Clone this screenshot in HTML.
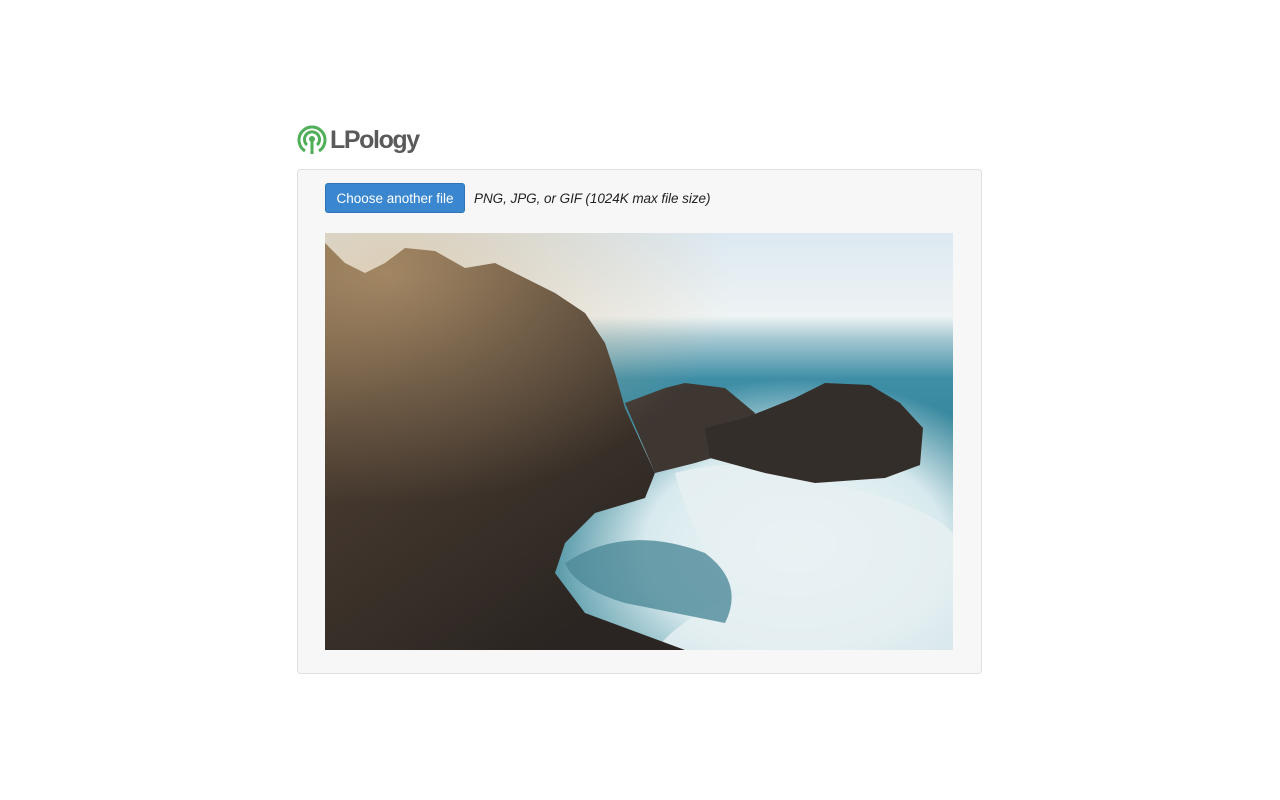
<!DOCTYPE html>
<html><head><style>
body{margin:0;background:#fff;font-family:"Liberation Sans",sans-serif;width:1280px;height:800px;position:relative;overflow:hidden}
.logo{position:absolute;left:296px;top:123px;height:34px;display:flex;align-items:center}
.logo span{font-weight:bold;font-size:25px;color:#5a5a5a;letter-spacing:-1.4px;margin-left:2px}
.panel{position:absolute;left:297px;top:169px;width:683px;height:503px;background:#f7f7f7;border:1px solid #e0e0e0;border-radius:4px}
.btn{position:absolute;left:325px;top:183px;width:140px;height:30px;background:#3a87cf;border:1px solid #2f75b5;border-radius:3px;box-sizing:border-box;color:#fff;font-size:13.5px;line-height:29px;text-align:center}
.hint{position:absolute;left:474px;top:191px;font-size:13.5px;font-style:italic;color:#222;letter-spacing:-0.05px}
.photo{position:absolute;left:325px;top:233px;width:628px;height:417px;overflow:hidden}
</style></head><body>
<div class="logo">
<svg width="32" height="32" viewBox="0 0 32 32"><g fill="none" stroke="#4fae57" stroke-width="3"><path d="M9 27 A13 13 0 1 1 23 27"/><path d="M11 21 A7.5 7.5 0 1 1 21 21"/><line x1="16" y1="16" x2="16" y2="30"/></g><circle cx="16" cy="15" r="3" fill="#4fae57"/></svg>
<span>LPology</span></div>
<div class="panel"></div>
<div class="btn">Choose another file</div>
<div class="hint">PNG, JPG, or GIF (1024K max file size)</div>
<div class="photo">
<svg width="628" height="417" viewBox="0 0 628 417">
<defs>
<linearGradient id="sky" x1="0" y1="0" x2="0" y2="1"><stop offset="0" stop-color="#dce9f2"/><stop offset="0.2" stop-color="#eef3f4"/><stop offset="0.25" stop-color="#a9cad4"/><stop offset="0.35" stop-color="#3e8ea6"/><stop offset="0.6" stop-color="#2f7f92"/><stop offset="1" stop-color="#6aa6b3"/></linearGradient>
<linearGradient id="cliff" x1="0" y1="0" x2="0.6" y2="1"><stop offset="0" stop-color="#6e5840"/><stop offset="0.35" stop-color="#4a3c30"/><stop offset="1" stop-color="#2a2522"/></linearGradient>
<radialGradient id="sun" cx="0.1" cy="0.1" r="0.55"><stop offset="0" stop-color="#d8b585" stop-opacity="0.55"/><stop offset="1" stop-color="#d8b585" stop-opacity="0"/></radialGradient>
<radialGradient id="foam" cx="0.75" cy="0.75" r="0.4"><stop offset="0" stop-color="#f4f8f8"/><stop offset="0.6" stop-color="#d8eaee"/><stop offset="1" stop-color="#d8eaee" stop-opacity="0"/></radialGradient>
</defs>
<rect width="628" height="417" fill="url(#sky)"/>
<rect width="628" height="417" fill="url(#foam)"/>
<path d="M350 240 Q420 220 500 250 Q600 270 628 300 L628 417 L330 417 Q360 380 420 360 Q370 320 350 240Z" fill="#e6f0f2" opacity="0.85"/>
<path d="M240 330 Q300 290 380 320 Q420 350 400 390 Q350 380 300 370 Q250 355 240 330Z" fill="#4d8a98" opacity="0.8"/>
<path d="M300 170 L340 155 L360 150 L400 155 L430 180 L420 215 L370 230 L330 240Z" fill="#3d3631"/>
<path d="M380 195 L420 185 L470 165 L500 150 L545 152 L575 170 L598 195 L595 232 L560 245 L490 250 L440 240 L385 225Z" fill="#342e2a"/>
<path d="M0 10 L20 30 L40 40 L60 30 L80 15 L110 18 L140 35 L170 30 L200 45 L230 60 L260 80 L280 110 L290 140 L300 175 L330 240 L320 265 L270 280 L240 310 L230 340 L260 380 L360 417 L0 417Z" fill="url(#cliff)"/>
<rect width="628" height="417" fill="url(#sun)"/>
</svg>
</div>
</body></html>
